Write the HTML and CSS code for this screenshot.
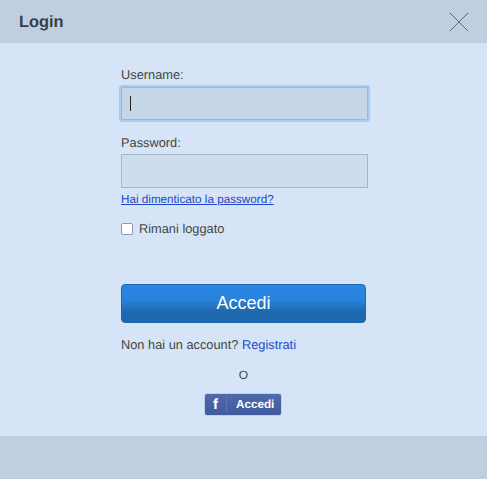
FILE: index.html
```html
<!DOCTYPE html>
<html lang="it">
<head>
<meta charset="utf-8">
<title>Login</title>
<link rel="stylesheet" href="styles.css">
</head>
<body>
<div class="dialog">
  <header class="head">
    <h1 class="title">Login</h1>
    <svg class="close" width="20" height="20" viewBox="0 0 20 20"><path d="M0.8 0.8L19.2 19.2M19.2 0.8L0.8 19.2" stroke="#60686f" stroke-width="1" fill="none"/></svg>
  </header>
  <main class="body">
    <form class="form">
      <label class="label">Username:</label>
      <div class="input focus"><span class="caret"></span></div>
      <label class="label second">Password:</label>
      <div class="input"></div>
      <a class="forgot" href="#">Hai dimenticato la password?</a>
      <div class="remember"><span class="check"></span><span>Rimani loggato</span></div>
      <button class="submit" type="button">Accedi</button>
      <p class="signup">Non hai un account? <a href="#">Registrati</a></p>
      <p class="or">O</p>
      <div class="fbwrap">
        <div class="fb"><span class="fb-f">f</span><span class="fb-sep"></span><span class="fb-text">Accedi</span></div>
      </div>
    </form>
  </main>
  <footer class="foot"></footer>
</div>
</body>
</html>
```
FILE: styles.css
```css
* { box-sizing: border-box; }
html, body { margin: 0; padding: 0; }
body { width: 487px; height: 479px; overflow: hidden; font-family: "Liberation Sans", Arial, sans-serif; color: #444; background: #d5e4f6; text-rendering: geometricPrecision; }
.dialog { display: flex; flex-direction: column; height: 479px; }
.head { height: 43px; flex: none; background: #bfcfdf; display: flex; align-items: center; justify-content: space-between; padding: 0 18px 0 19px; }
.title { margin: 0; font-size: 16.4px; line-height: 20px; padding-top: 1px; font-weight: bold; color: #3a3f44; }
.close { display: block; }
.body { flex: 1; background: #d5e4f6; padding-left: 121px; }
.form { width: 247px; display: flex; flex-direction: column; padding-top: 24px; }
.label { font-size: 12.8px; line-height: 15px; color: #444; height: 15px; }
.label.second { margin-top: 15px; }
.input { height: 34px; margin-top: 4px; background: #cddded; border: 1px solid #a5b7c6; display: flex; align-items: center; padding-left: 8px; }
.input.focus { height: 33px; margin-top: 5px; background: #c6d6e6; box-shadow: 0 0 0 2px #a6ccf7; border-radius: 1px; }
.caret { width: 1px; height: 15px; background: #222; }
.forgot { font-size: 11.7px; line-height: 14px; color: #1e48c8; margin-top: 5px; text-decoration: underline; }
.remember { display: flex; align-items: center; margin-top: 14px; font-size: 12.8px; line-height: 15px; color: #444; height: 15px; }
.check { width: 12px; height: 12px; margin: 1px 6px 0 0; background: #fff; border: 1px solid #8f9aa5; border-radius: 2px; }
.submit { margin-top: 48px; height: 39px; width: 245px; padding: 0; border: 1px solid #1d68ad; border-radius: 4px; background: linear-gradient(to bottom, #2a87e4 0%, #2a82dc 40%, #1f69b0 70%, #1f68ae 100%); color: #fff; font-family: inherit; font-size: 18px; }
.signup { margin: 14px 0 0; font-size: 12.8px; line-height: 15px; color: #444; }
.signup a { color: #1e48c8; text-decoration: none; }
.or { margin: 16px 2px 0 0; font-size: 12px; line-height: 15px; text-align: center; color: #444; }
.fbwrap { display: flex; justify-content: center; margin-top: 11px; padding-right: 3px; }
.fb { width: 76px; height: 21px; display: flex; align-items: center; background: linear-gradient(to bottom, #5069ab, #3f5a9e); border-radius: 2px; color: #fff; font-weight: bold; font-size: 11.7px; box-shadow: 0 0 0 1px #c0cfe6; }
.fb-f { width: 21px; text-align: center; font-size: 15px; line-height: 21px; }
.fb-sep { width: 1px; height: 15px; background: #5f76b2; }
.fb-text { margin-left: 9px; }
.foot { height: 43px; flex: none; background: #bfcfdf; }
```
